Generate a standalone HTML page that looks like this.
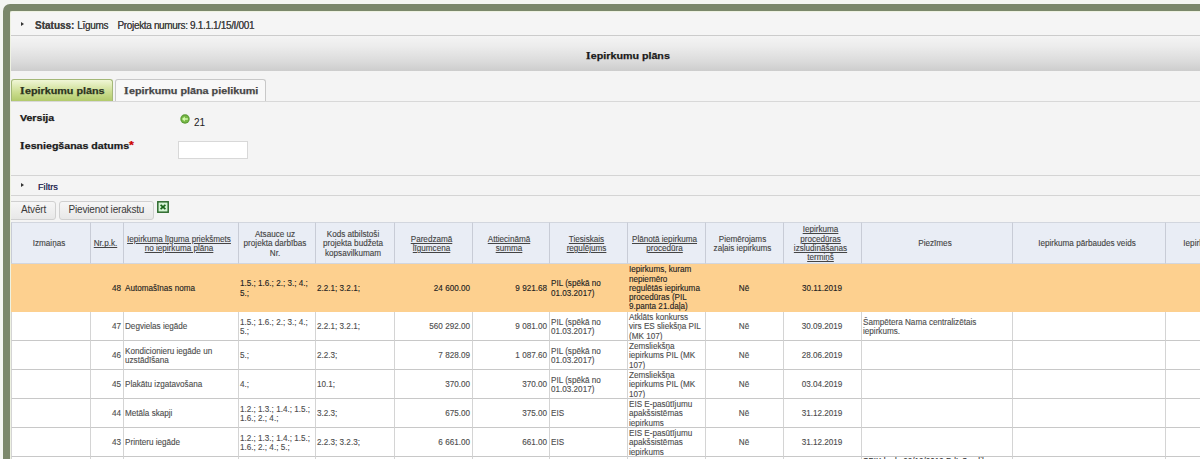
<!DOCTYPE html>
<html><head><meta charset="utf-8">
<style>
*{margin:0;padding:0;box-sizing:border-box}
html,body{width:1200px;height:459px;overflow:hidden;background:#f4f6f2;font-family:"Liberation Sans",sans-serif}
#frame{position:absolute;left:3px;top:4px;width:1300px;height:600px;background:#7b886b;border-radius:7px}
#inner{position:absolute;left:10px;top:11px;width:1500px;height:600px;background:#f4f4f4;border-top:1px solid #eef2e2;border-left:1px solid #eef2e2;border-radius:2px 0 0 0;overflow:hidden}
.abs{position:absolute}
#status{left:0;top:0;width:1500px;height:24px;background:#f5f5f5;border-bottom:1px solid #cccccc}
.arrow{position:absolute;width:0;height:0;border-top:2.5px solid transparent;border-bottom:2.5px solid transparent;border-left:3.5px solid #333}
#status .txt{position:absolute;left:24px;top:8.5px;font-size:10px;line-height:10px;color:#444;white-space:nowrap}
#titlebar{left:0;top:24px;width:1300px;height:35px;background:linear-gradient(#f4f4f4,#ececec 30%,#dadada 75%,#cdcdcd)}
#titlebar .t{position:absolute;left:575px;top:15px;font-size:9.4px;font-weight:bold;color:#1a1a1a;line-height:10px;transform:scaleX(1.14);transform-origin:0 0;white-space:nowrap;-webkit-text-stroke:0.25px}
#tabline{left:0;top:88.5px;width:1300px;height:1px;background:#d8d8d8}
.tab{position:absolute;top:67px;height:22px;border:1px solid #c8c8c8;border-bottom:none;border-radius:3px 3px 0 0;font-size:9.4px;font-weight:bold;line-height:10px}
#tab1{left:0;width:102px;background:linear-gradient(#f0f6d6,#cadc8e 60%,#b2ca6c);border-color:#a4b878;color:#2b3320}
#tab2{left:104px;width:151px;background:#f8f8f8;color:#474747}
.tab span{position:absolute;top:5.5px;transform:scaleX(1.15);transform-origin:0 0;white-space:nowrap;-webkit-text-stroke:0.25px}
.lbl{position:absolute;font-size:9.4px;font-weight:bold;color:#1a1a1a;line-height:10px;white-space:nowrap;transform:scaleX(1.13);transform-origin:0 0;-webkit-text-stroke:0.25px}
#filtrs{left:0;top:163px;width:1500px;height:21px;border-top:1px solid #d4d4d4;border-bottom:1px solid #d4d4d4;background:#f4f4f4}
.btn{position:absolute;top:189px;height:19px;border:1px solid #d0d0d0;border-radius:3px;background:linear-gradient(#f6f6f6,#e8e8e8);font-size:10px;letter-spacing:-0.18px;color:#3a3a3a;line-height:10px}
.btn span{position:absolute;top:3px}
#grid{position:absolute;left:0;top:210px;width:1303px;border-collapse:separate;border-spacing:0;table-layout:fixed;font-size:8.15px;line-height:9.3px;color:#4e4e4e;-webkit-text-stroke:0.12px}
#grid th{background:#e9edf5;font-weight:normal;border-left:1px solid #c8ccd6;border-top:1px solid #d2d6de;border-bottom:1px solid #d2d6de;height:42px;text-align:center;vertical-align:middle;padding:2px 7px 0 3px;color:#444}
#grid th:nth-child(2){padding:2px 4px 0 1px}
#grid th u{text-decoration:underline}
#grid td{border-left:1px solid #d4d4d4;border-bottom:1px solid #c8c8c8;height:29px;vertical-align:middle;padding:0 2px 0 1px;background:#fff;overflow:hidden}
#grid td i{display:block;position:relative;top:1px;font-style:normal}
#grid tr.sel td{background:#fdd08f;border-left-color:#fdd08f;border-bottom-color:#fdd08f;color:#222;height:48px}
.sI{font-family:"Liberation Serif",serif;font-style:normal;font-size:1.08em;margin-right:0.3px}
.r{text-align:right}.c{text-align:center}
</style></head><body>
<div id="frame"></div>
<div id="inner">
  <div id="status" class="abs">
    <div class="arrow" style="left:10px;top:10px"></div>
    <div class="txt"><b style="text-shadow:0 0 0.4px #444">Statuss:</b> <span style="letter-spacing:-0.3px;text-shadow:0 0 0.3px #444">Līgums</span><span style="position:absolute;left:82.5px;top:0;letter-spacing:-0.34px;text-shadow:0 0 0.4px #444">Projekta numurs: 9.1.1.1/15/I/001</span></div>
  </div>
  <div id="titlebar" class="abs"><div class="t"><i class="sI">I</i>epirkumu plāns</div></div>
  <div id="tabline" class="abs"></div>
  <div id="tab1" class="tab"><span style="left:8px"><i class="sI">I</i>epirkumu plāns</span></div>
  <div id="tab2" class="tab"><span style="left:8px"><i class="sI">I</i>epirkumu plāna pielikumi</span></div>
  <div class="lbl" style="left:9px;top:100.5px">Versija</div>
  <svg class="abs" style="left:169px;top:102px" width="10" height="10" viewBox="0 0 10 10"><circle cx="5" cy="5" r="4.7" fill="#5a9a34"/><circle cx="5" cy="5" r="3.6" fill="#78b846"/><path d="M2.0 5 L4.8 2.6 L4.8 4.2 L7.8 4.2 L7.8 5.8 L4.8 5.8 L4.8 7.4 Z" fill="#d4fcae"/></svg>
  <div class="abs" style="left:183px;top:106px;font-size:10px;line-height:10px;color:#222">21</div>
  <div class="lbl" style="left:9px;top:128px"><i class="sI">I</i>esniegšanas datums<span style="color:#c00;font-size:11px">*</span></div>
  <div class="abs" style="left:167px;top:129px;width:70px;height:18px;background:#fff;border:1px solid #d8d8d8"></div>
  <div id="filtrs" class="abs">
    <div class="arrow" style="left:10px;top:7px"></div>
    <div class="abs" style="left:27px;top:6px;font-size:9.2px;line-height:10px;color:#33335a;text-shadow:0 0 0.3px #33335a">Filtrs</div>
  </div>
  <div class="btn" style="left:-3px;width:48px;border-radius:0 3px 3px 0"><span style="left:12px">Atvērt</span></div>
  <div class="btn" style="left:48px;width:95px"><span style="left:8.5px">Pievienot ierakstu</span></div>
  <svg class="abs" style="left:146px;top:189px" width="12" height="12" viewBox="0 0 12 12"><rect x="0.8" y="0.8" width="10.4" height="10.4" fill="#d4f4d4" stroke="#2d6a2d" stroke-width="1.5"/><path d="M3.6 3.8 L8.4 8.2 M8.4 3.8 L3.6 8.2" stroke="#1a641a" stroke-width="1.7"/></svg>
  <table id="grid">
    <colgroup>
      <col style="width:79px"><col style="width:33px"><col style="width:115px"><col style="width:77px"><col style="width:79px"><col style="width:78px"><col style="width:77px"><col style="width:78px"><col style="width:78px"><col style="width:78px"><col style="width:78px"><col style="width:151px"><col style="width:153px"><col style="width:149px">
    </colgroup>
    <tr>
      <th>Izmaiņas</th><th><u>Nr.p.k.</u></th><th><u>Iepirkuma līguma priekšmets no iepirkuma plāna</u></th><th>Atsauce uz projekta darbības Nr.</th><th>Kods atbilstoši projekta budžeta kopsavilkumam</th><th><u>Paredzamā līgumcena</u></th><th><u>Attiecināmā summa</u></th><th><u>Tiesiskais regulējums</u></th><th><u>Plānotā iepirkuma procedūra</u></th><th>Piemērojams zaļais iepirkums</th><th><u>Iepirkuma procedūras izsludināšanas termiņš</u></th><th>Piezīmes</th><th>Iepirkuma pārbaudes veids</th><th>Iepirkuma pārbaudes rezultāts</th>
    </tr>
    <tr class="sel">
      <td></td><td class="r"><i>48</i></td><td><i>Automašīnas noma</i></td><td><i>1.5.; 1.6.; 2.; 3.; 4.; 5.;</i></td><td><i>2.2.1; 3.2.1;</i></td><td class="r"><i>24 600.00</i></td><td class="r"><i>9 921.68</i></td><td><i>PIL (spēkā no 01.03.2017)</i></td><td><i>Iepirkums, kuram nepiemēro regulētās iepirkuma procedūras (PIL 9.panta 21.daļa)</i></td><td class="c"><i>Nē</i></td><td class="c"><i>30.11.2019</i></td><td></td><td></td><td></td>
    </tr>
    <tr>
      <td></td><td class="r"><i>47</i></td><td><i>Degvielas iegāde</i></td><td><i>1.5.; 1.6.; 2.; 3.; 4.; 5.;</i></td><td><i>2.2.1; 3.2.1;</i></td><td class="r"><i>560 292.00</i></td><td class="r"><i>9 081.00</i></td><td><i>PIL (spēkā no 01.03.2017)</i></td><td><i>Atklāts konkurss virs ES sliekšņa PIL (MK 107)</i></td><td class="c"><i>Nē</i></td><td class="c"><i>30.09.2019</i></td><td><i>Šampētera Nama centralizētais iepirkums.</i></td><td></td><td></td>
    </tr>
    <tr>
      <td></td><td class="r"><i>46</i></td><td><i>Kondicionieru iegāde un uzstādīšana</i></td><td><i>5.;</i></td><td><i>2.2.3;</i></td><td class="r"><i>7 828.09</i></td><td class="r"><i>1 087.60</i></td><td><i>PIL (spēkā no 01.03.2017)</i></td><td><i>Zemsliekšņa iepirkums PIL (MK 107)</i></td><td class="c"><i>Nē</i></td><td class="c"><i>28.06.2019</i></td><td></td><td></td><td></td>
    </tr>
    <tr>
      <td></td><td class="r"><i>45</i></td><td><i>Plakātu izgatavošana</i></td><td><i>4.;</i></td><td><i>10.1;</i></td><td class="r"><i>370.00</i></td><td class="r"><i>370.00</i></td><td><i>PIL (spēkā no 01.03.2017)</i></td><td><i>Zemsliekšņa iepirkums PIL (MK 107)</i></td><td class="c"><i>Nē</i></td><td class="c"><i>03.04.2019</i></td><td></td><td></td><td></td>
    </tr>
    <tr>
      <td></td><td class="r"><i>44</i></td><td><i>Metāla skapji</i></td><td><i>1.2.; 1.3.; 1.4.; 1.5.; 1.6.; 2.; 4.;</i></td><td><i>3.2.3;</i></td><td class="r"><i>675.00</i></td><td class="r"><i>375.00</i></td><td><i>EIS</i></td><td><i>EIS E-pasūtījumu apakšsistēmas iepirkums</i></td><td class="c"><i>Nē</i></td><td class="c"><i>31.12.2019</i></td><td></td><td></td><td></td>
    </tr>
    <tr>
      <td></td><td class="r"><i>43</i></td><td><i>Printeru iegāde</i></td><td><i>1.2.; 1.3.; 1.4.; 1.5.; 1.6.; 2.; 4.; 5.;</i></td><td><i>2.2.3; 3.2.3;</i></td><td class="r"><i>6 661.00</i></td><td class="r"><i>661.00</i></td><td><i>EIS</i></td><td><i>EIS E-pasūtījumu apakšsistēmas iepirkums</i></td><td class="c"><i>Nē</i></td><td class="c"><i>31.12.2019</i></td><td></td><td></td><td></td>
    </tr>
    <tr>
      <td></td><td class="r"><i>42</i></td><td><i>Biroja preces</i></td><td><i>1.2.;</i></td><td><i>2.2.3;</i></td><td class="r"><i>1 000.00</i></td><td class="r"><i>500.00</i></td><td><i>EIS</i></td><td><i>EIS E-pasūtījumu</i></td><td class="c"><i>Nē</i></td><td class="c"><i>31.12.2019</i></td><td style="vertical-align:top;color:#333"><div style="margin-top:-0.5px">SPIK kods 22/12/2019 PdL 3 nolikuma grozījumi un papildu informācija par iepirkumu</div></td><td></td><td></td>
    </tr>
  </table>
</div>
</body></html>
